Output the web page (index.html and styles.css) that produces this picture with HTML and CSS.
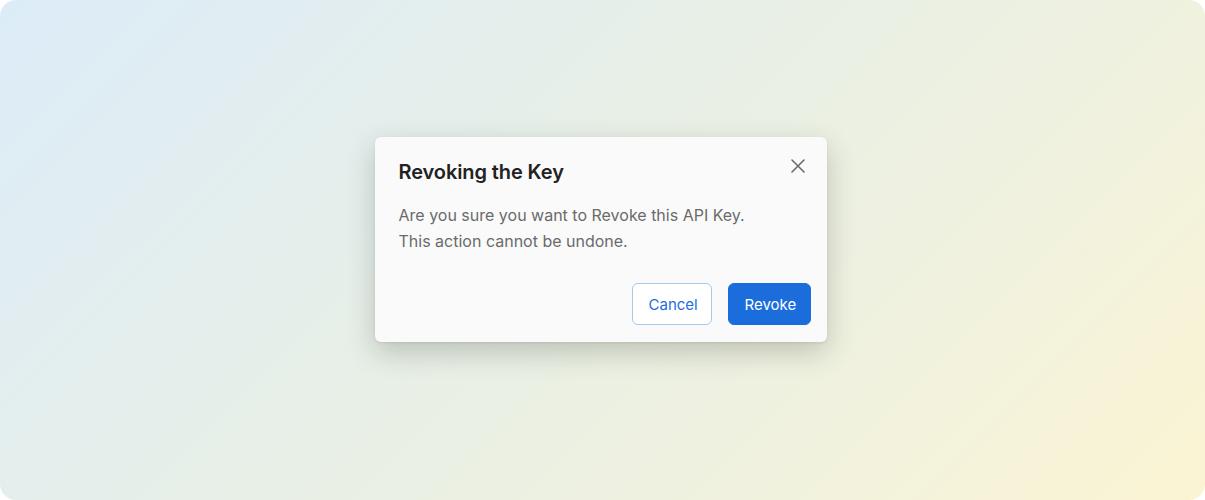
FILE: index.html
```html
<!DOCTYPE html>
<html lang="en">
<head>
<meta charset="utf-8">
<title>Revoking the Key</title>
<link rel="stylesheet" href="styles.css">
</head>
<body>
<div class="page">
  <div class="dialog" role="dialog" aria-labelledby="dlg-title">
    <div class="dialog-head">
      <h2 class="dialog-title" id="dlg-title">Revoking the Key</h2>
      <button class="close-btn" aria-label="Close">
        <svg width="16" height="16" viewBox="0 0 16 16" fill="none" stroke="#6b6b6b" stroke-width="1.6" stroke-linecap="round">
          <path d="M2 2L14 14M14 2L2 14"/>
        </svg>
      </button>
    </div>
    <p class="dialog-body">Are you sure you want to Revoke this API Key.<br>This action cannot be undone.</p>
    <div class="dialog-actions">
      <button class="btn btn-outline">Cancel</button>
      <button class="btn btn-primary">Revoke</button>
    </div>
  </div>
</div>
</body>
</html>
```
FILE: styles.css
```css
html, body {
  margin: 0;
  padding: 0;
  background: #ffffff;
}
body {
  font-family: Inter, "Noto Sans", "Liberation Sans", sans-serif;
}
.page {
  width: 1205px;
  height: 500px;
  box-sizing: border-box;
  border-radius: 16px;
  background: linear-gradient(135deg, #dcecf8 0%, #e8efe6 45%, #f1f2de 75%, #fbf4d3 100%);
  display: flex;
  align-items: center;
  justify-content: center;
  padding: 0 4px 21px 0;
}
.dialog {
  width: 452px;
  box-sizing: border-box;
  background: #fafafa;
  border-radius: 6px;
  padding: 21px 16px 17px 24px;
  box-shadow: 0 10px 28px rgba(40, 50, 40, 0.24), 0 1px 3px rgba(0, 0, 0, 0.08);
}
.dialog-head {
  display: flex;
  justify-content: space-between;
  align-items: flex-start;
}
.dialog-title {
  margin: 0;
  font-size: 20px;
  line-height: 28px;
  font-weight: 600;
  color: #222222;
  letter-spacing: -0.1px;
}
.close-btn {
  border: 0;
  background: none;
  padding: 0;
  margin: 0 5px 0 0;
  width: 16px;
  height: 16px;
  display: flex;
  cursor: pointer;
}
.dialog-body {
  margin: 16px 0 0 0;
  font-size: 16px;
  line-height: 26px;
  color: #6a6a6a;
}
.dialog-actions {
  margin-top: 29px;
  display: flex;
  justify-content: flex-end;
  gap: 16px;
}
.btn {
  height: 42px;
  box-sizing: border-box;
  border-radius: 6px;
  font-family: inherit;
  font-size: 15px;
  font-weight: 400;
  padding: 0 16px;
  cursor: pointer;
}
.btn-outline {
  width: 80px;
  background: #ffffff;
  border: 1px solid #a9c8ef;
  color: #1d6fdc;
}
.btn-primary {
  width: 83px;
  background: #1a6ddb;
  border: 1px solid #1a6ddb;
  color: #ffffff;
}
```
